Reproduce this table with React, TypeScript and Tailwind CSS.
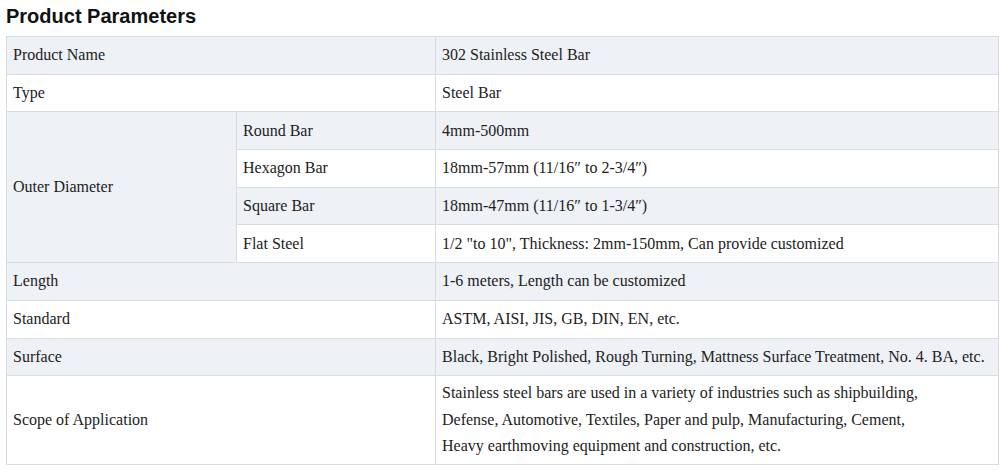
import React from "react";

const serif = { fontFamily: '"Liberation Serif", "Times New Roman", serif' };

export default function App() {
  const td = "border border-[#d9dce1] px-[6px] align-middle";
  const stripe = "bg-[#eef1f6]";
  const h = "h-[37.7px]";
  return (
    <div className="w-[1000px] h-[471px] bg-white overflow-hidden">
      <h2
        className="pl-[6px] pt-[4px] text-[20px] leading-[24px] font-bold text-[#111]"
        style={{ fontFamily: '"Liberation Sans", Arial, sans-serif' }}
      >
        Product Parameters
      </h2>
      <div className="pl-[6px] pt-[8px]">
        <table
          className="border-collapse w-[993px] table-fixed text-[16px] text-[#222]"
          style={serif}
        >
          <colgroup>
            <col className="w-[230px]" />
            <col className="w-[199px]" />
            <col />
          </colgroup>
          <tbody>
            <tr className={stripe}>
              <td className={`${td} ${h}`} colSpan={2}>Product Name</td>
              <td className={td}>302 Stainless Steel Bar</td>
            </tr>
            <tr>
              <td className={`${td} ${h}`} colSpan={2}>Type</td>
              <td className={td}>Steel Bar</td>
            </tr>
            <tr className={stripe}>
              <td className={td} rowSpan={4}>Outer Diameter</td>
              <td className={`${td} ${h}`}>Round Bar</td>
              <td className={td}>4mm-500mm</td>
            </tr>
            <tr>
              <td className={`${td} ${h} bg-white`}>Hexagon Bar</td>
              <td className={`${td} bg-white`}>18mm-57mm (11/16″ to 2-3/4″)</td>
            </tr>
            <tr>
              <td className={`${td} ${h} ${stripe}`}>Square Bar</td>
              <td className={`${td} ${stripe}`}>18mm-47mm (11/16″ to 1-3/4″)</td>
            </tr>
            <tr>
              <td className={`${td} ${h} bg-white`}>Flat Steel</td>
              <td className={`${td} bg-white`}>1/2 "to 10", Thickness: 2mm-150mm, Can provide customized</td>
            </tr>
            <tr className={stripe}>
              <td className={`${td} ${h}`} colSpan={2}>Length</td>
              <td className={td}>1-6 meters, Length can be customized</td>
            </tr>
            <tr>
              <td className={`${td} ${h}`} colSpan={2}>Standard</td>
              <td className={td}>ASTM, AISI, JIS, GB, DIN, EN, etc.</td>
            </tr>
            <tr className={stripe}>
              <td className={`${td} ${h}`} colSpan={2}>Surface</td>
              <td className={`${td} whitespace-nowrap`}>Black, Bright Polished, Rough Turning, Mattness Surface Treatment, No. 4. BA, etc.</td>
            </tr>
            <tr>
              <td className={`${td} h-[89px]`} colSpan={2}>Scope of Application</td>
              <td className={`${td} leading-[26.5px]`}>
                Stainless steel bars are used in a variety of industries such as shipbuilding,
                <br />
                Defense, Automotive, Textiles, Paper and pulp, Manufacturing, Cement,
                <br />
                Heavy earthmoving equipment and construction, etc.
              </td>
            </tr>
          </tbody>
        </table>
      </div>
    </div>
  );
}
